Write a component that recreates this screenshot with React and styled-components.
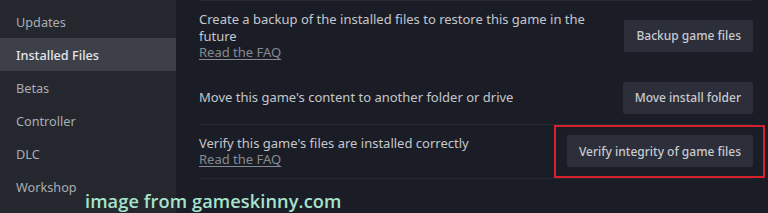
import React from "react";
import styled, { createGlobalStyle } from "styled-components";

const Global = createGlobalStyle`
  html, body { margin: 0; padding: 0; background: #1b1d26; overflow: hidden; }
  body { font-family: "Noto Sans", "Open Sans", sans-serif; }
`;

const Page = styled.div`
  position: relative;
  display: flex;
  width: 768px;
  height: 213px;
  background: #1b1d26;
  overflow: hidden;
`;

const Sidebar = styled.nav`
  width: 176px;
  flex-shrink: 0;
  background: #25272e;
  padding-top: 5px;
  display: flex;
  flex-direction: column;
`;

const NavItem = styled.div`
  height: 33px;
  display: flex;
  align-items: center;
  padding-left: 16px;
  font-size: 12.7px;
  color: ${(p) => (p.$active ? "#e4e6e9" : "#a9adb3")};
  background: ${(p) => (p.$active ? "#3d4049" : "transparent")};
  font-weight: ${(p) => (p.$active ? 500 : 400)};
`;

const Main = styled.main`
  flex: 1;
  padding: 0 15px 0 23px;
  display: flex;
  flex-direction: column;
`;

const Row = styled.div`
  display: flex;
  align-items: center;
  justify-content: space-between;
  gap: 20px;
  padding: 10px 0;
  border-top: 1px solid ${(p) => (p.$divided ? "#262833" : "transparent")};
  border-bottom: ${(p) => (p.$last ? "1px solid #262833" : "none")};
`;

const Text = styled.div`
  font-size: 13px;
  line-height: 16.5px;
  color: #c4c7cc;
  max-width: 400px;
`;

const Faq = styled.a`
  display: block;
  color: #858a92;
  text-decoration: underline;
  text-underline-offset: 2px;
`;

const Button = styled.button`
  position: relative;
  flex-shrink: 0;
  height: 32px;
  padding: 0 12px;
  border: none;
  border-radius: 2px;
  background: #2c2f39;
  color: #c8cbd0;
  font-family: "Noto Sans", "Open Sans", sans-serif;
  font-size: 12px;
  font-weight: 500;
  &::after {
    content: "";
    display: ${(p) => (p.$highlight ? "block" : "none")};
    position: absolute;
    inset: -10px -12px -11px -13px;
    border: 2px solid #d6202b;
  }
`;

const Watermark = styled.div`
  position: absolute;
  left: 85px;
  top: 189px;
  font-family: "Open Sans", sans-serif;
  font-weight: 600;
  font-size: 18.2px;
  letter-spacing: 0.1px;
  color: #a6e3cc;
`;

export default function App() {
  return (
    <Page>
      <Global />
      <Sidebar>
        <NavItem>Updates</NavItem>
        <NavItem $active>Installed Files</NavItem>
        <NavItem>Betas</NavItem>
        <NavItem>Controller</NavItem>
        <NavItem>DLC</NavItem>
        <NavItem>Workshop</NavItem>
      </Sidebar>
      <Main>
        <Row $divided>
          <Text>
            Create a backup of the installed files to restore this game in the
            future
            <Faq>Read the FAQ</Faq>
          </Text>
          <Button>Backup game files</Button>
        </Row>
        <Row>
          <Text>Move this game's content to another folder or drive</Text>
          <Button>Move install folder</Button>
        </Row>
        <Row $divided $last>
          <Text>
            Verify this game's files are installed correctly
            <Faq>Read the FAQ</Faq>
          </Text>
          <Button $highlight>Verify integrity of game files</Button>
        </Row>
      </Main>
      <Watermark>image from gameskinny.com</Watermark>
    </Page>
  );
}
